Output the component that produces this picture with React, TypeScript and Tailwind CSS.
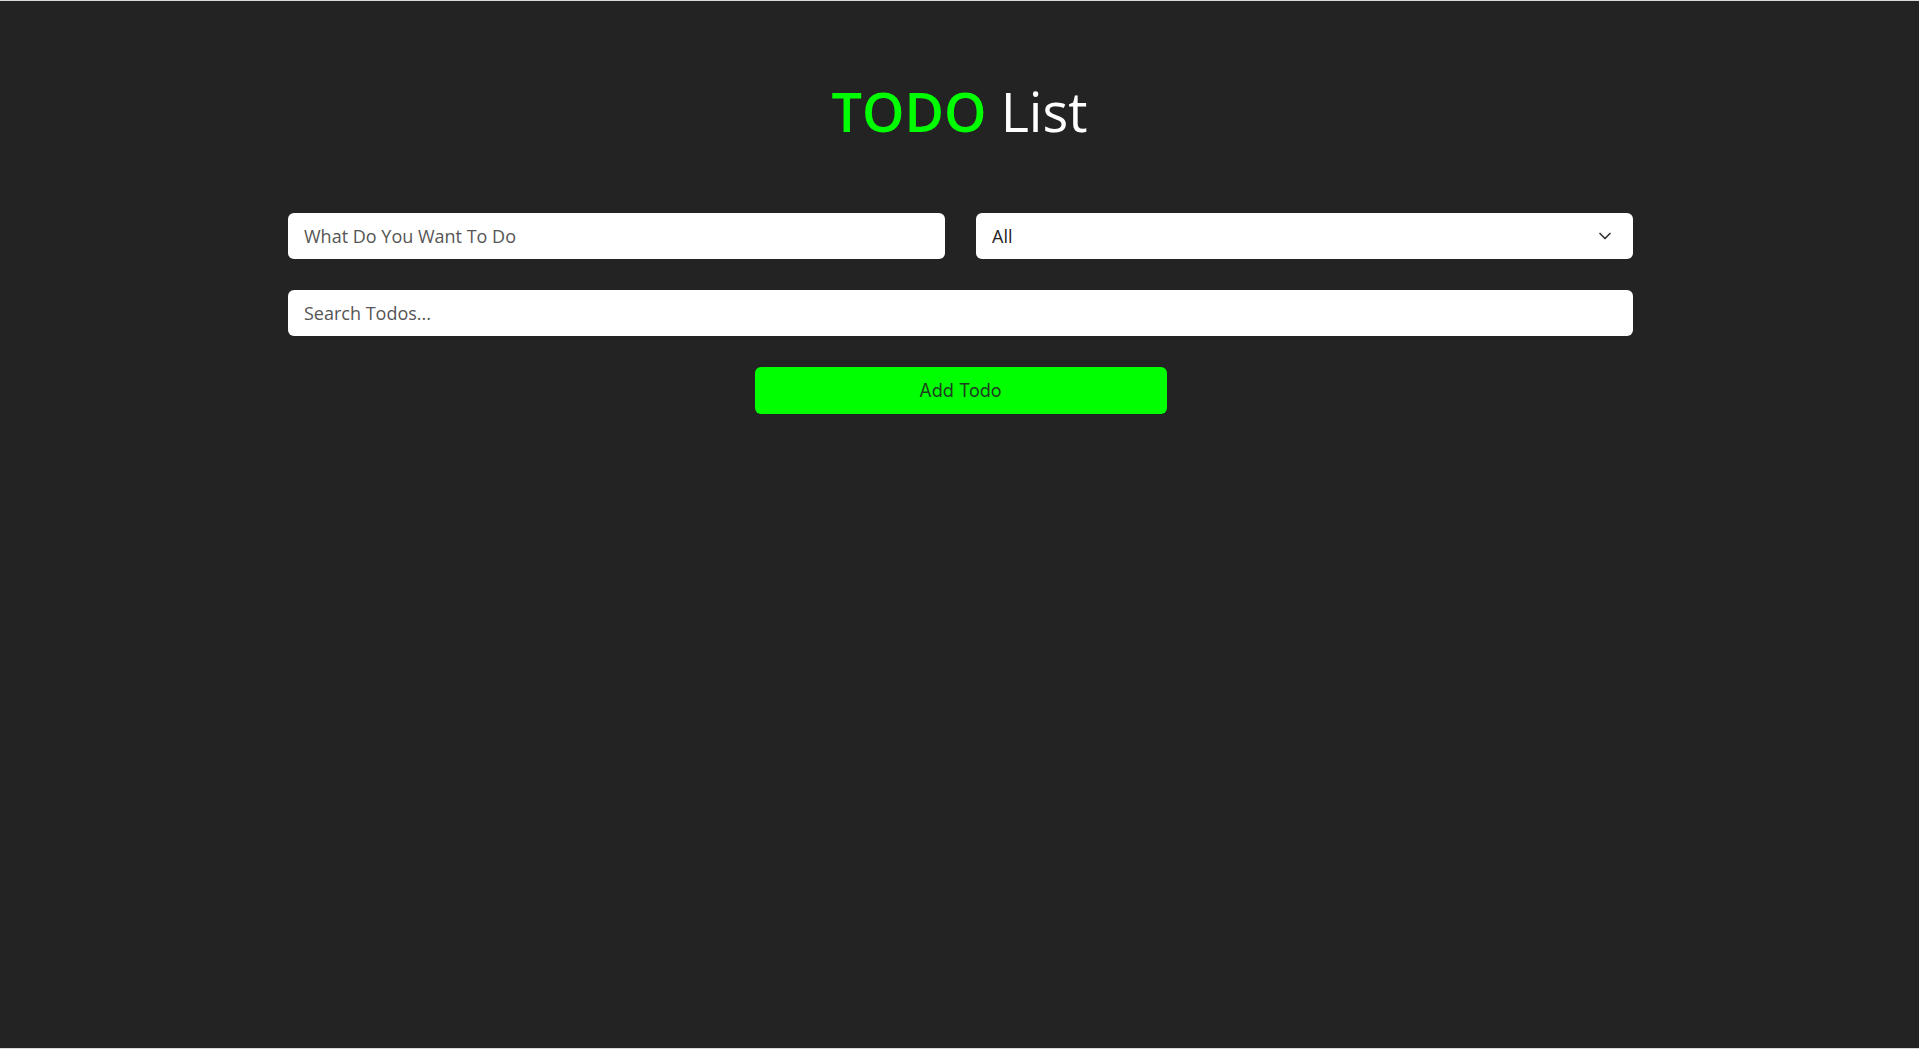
import { ChevronDown } from "lucide-react";

export default function App() {
  return (
    <div className="h-[1049px] w-full bg-[#232323] border-t border-b border-[#d9d9d9] overflow-hidden font-['Open_Sans',sans-serif]">
      <h1 className="mt-[68px] text-center text-[54px] font-semibold leading-[84px] text-white">
        <span className="text-[#00ff00]">TODO</span> <span className="font-normal">List</span>
      </h1>
      <div className="mx-auto mt-[60px] w-[1345px] translate-x-[1px] flex flex-col">
        <div className="grid grid-cols-2 gap-[31px]">
          <input
            type="text"
            placeholder="What Do You Want To Do"
            className="h-[46px] w-full min-w-0 rounded-[6px] bg-white px-4 text-[18px] text-[#333] placeholder:text-[#555] outline-none"
          />
          <div className="relative">
            <select className="h-[46px] w-full appearance-none rounded-[6px] bg-white px-4 text-[18px] text-[#222] outline-none">
              <option>All</option>
              <option>Completed</option>
              <option>Uncompleted</option>
            </select>
            <ChevronDown
              className="pointer-events-none absolute right-[18px] top-1/2 -translate-y-1/2 text-[#333]"
              size={20}
              strokeWidth={2}
            />
          </div>
        </div>
        <input
          type="text"
          placeholder="Search Todos..."
          className="mt-[31px] h-[46px] w-full rounded-[6px] bg-white px-4 text-[18px] text-[#333] placeholder:text-[#555] outline-none"
        />
        <button
          type="button"
          className="mx-auto mt-[31px] h-[47px] w-[412px] rounded-[6px] bg-[#00ff00] text-[18px] text-[#1f3d1f] font-['Inter',sans-serif]"
        >
          Add Todo
        </button>
      </div>
    </div>
  );
}
